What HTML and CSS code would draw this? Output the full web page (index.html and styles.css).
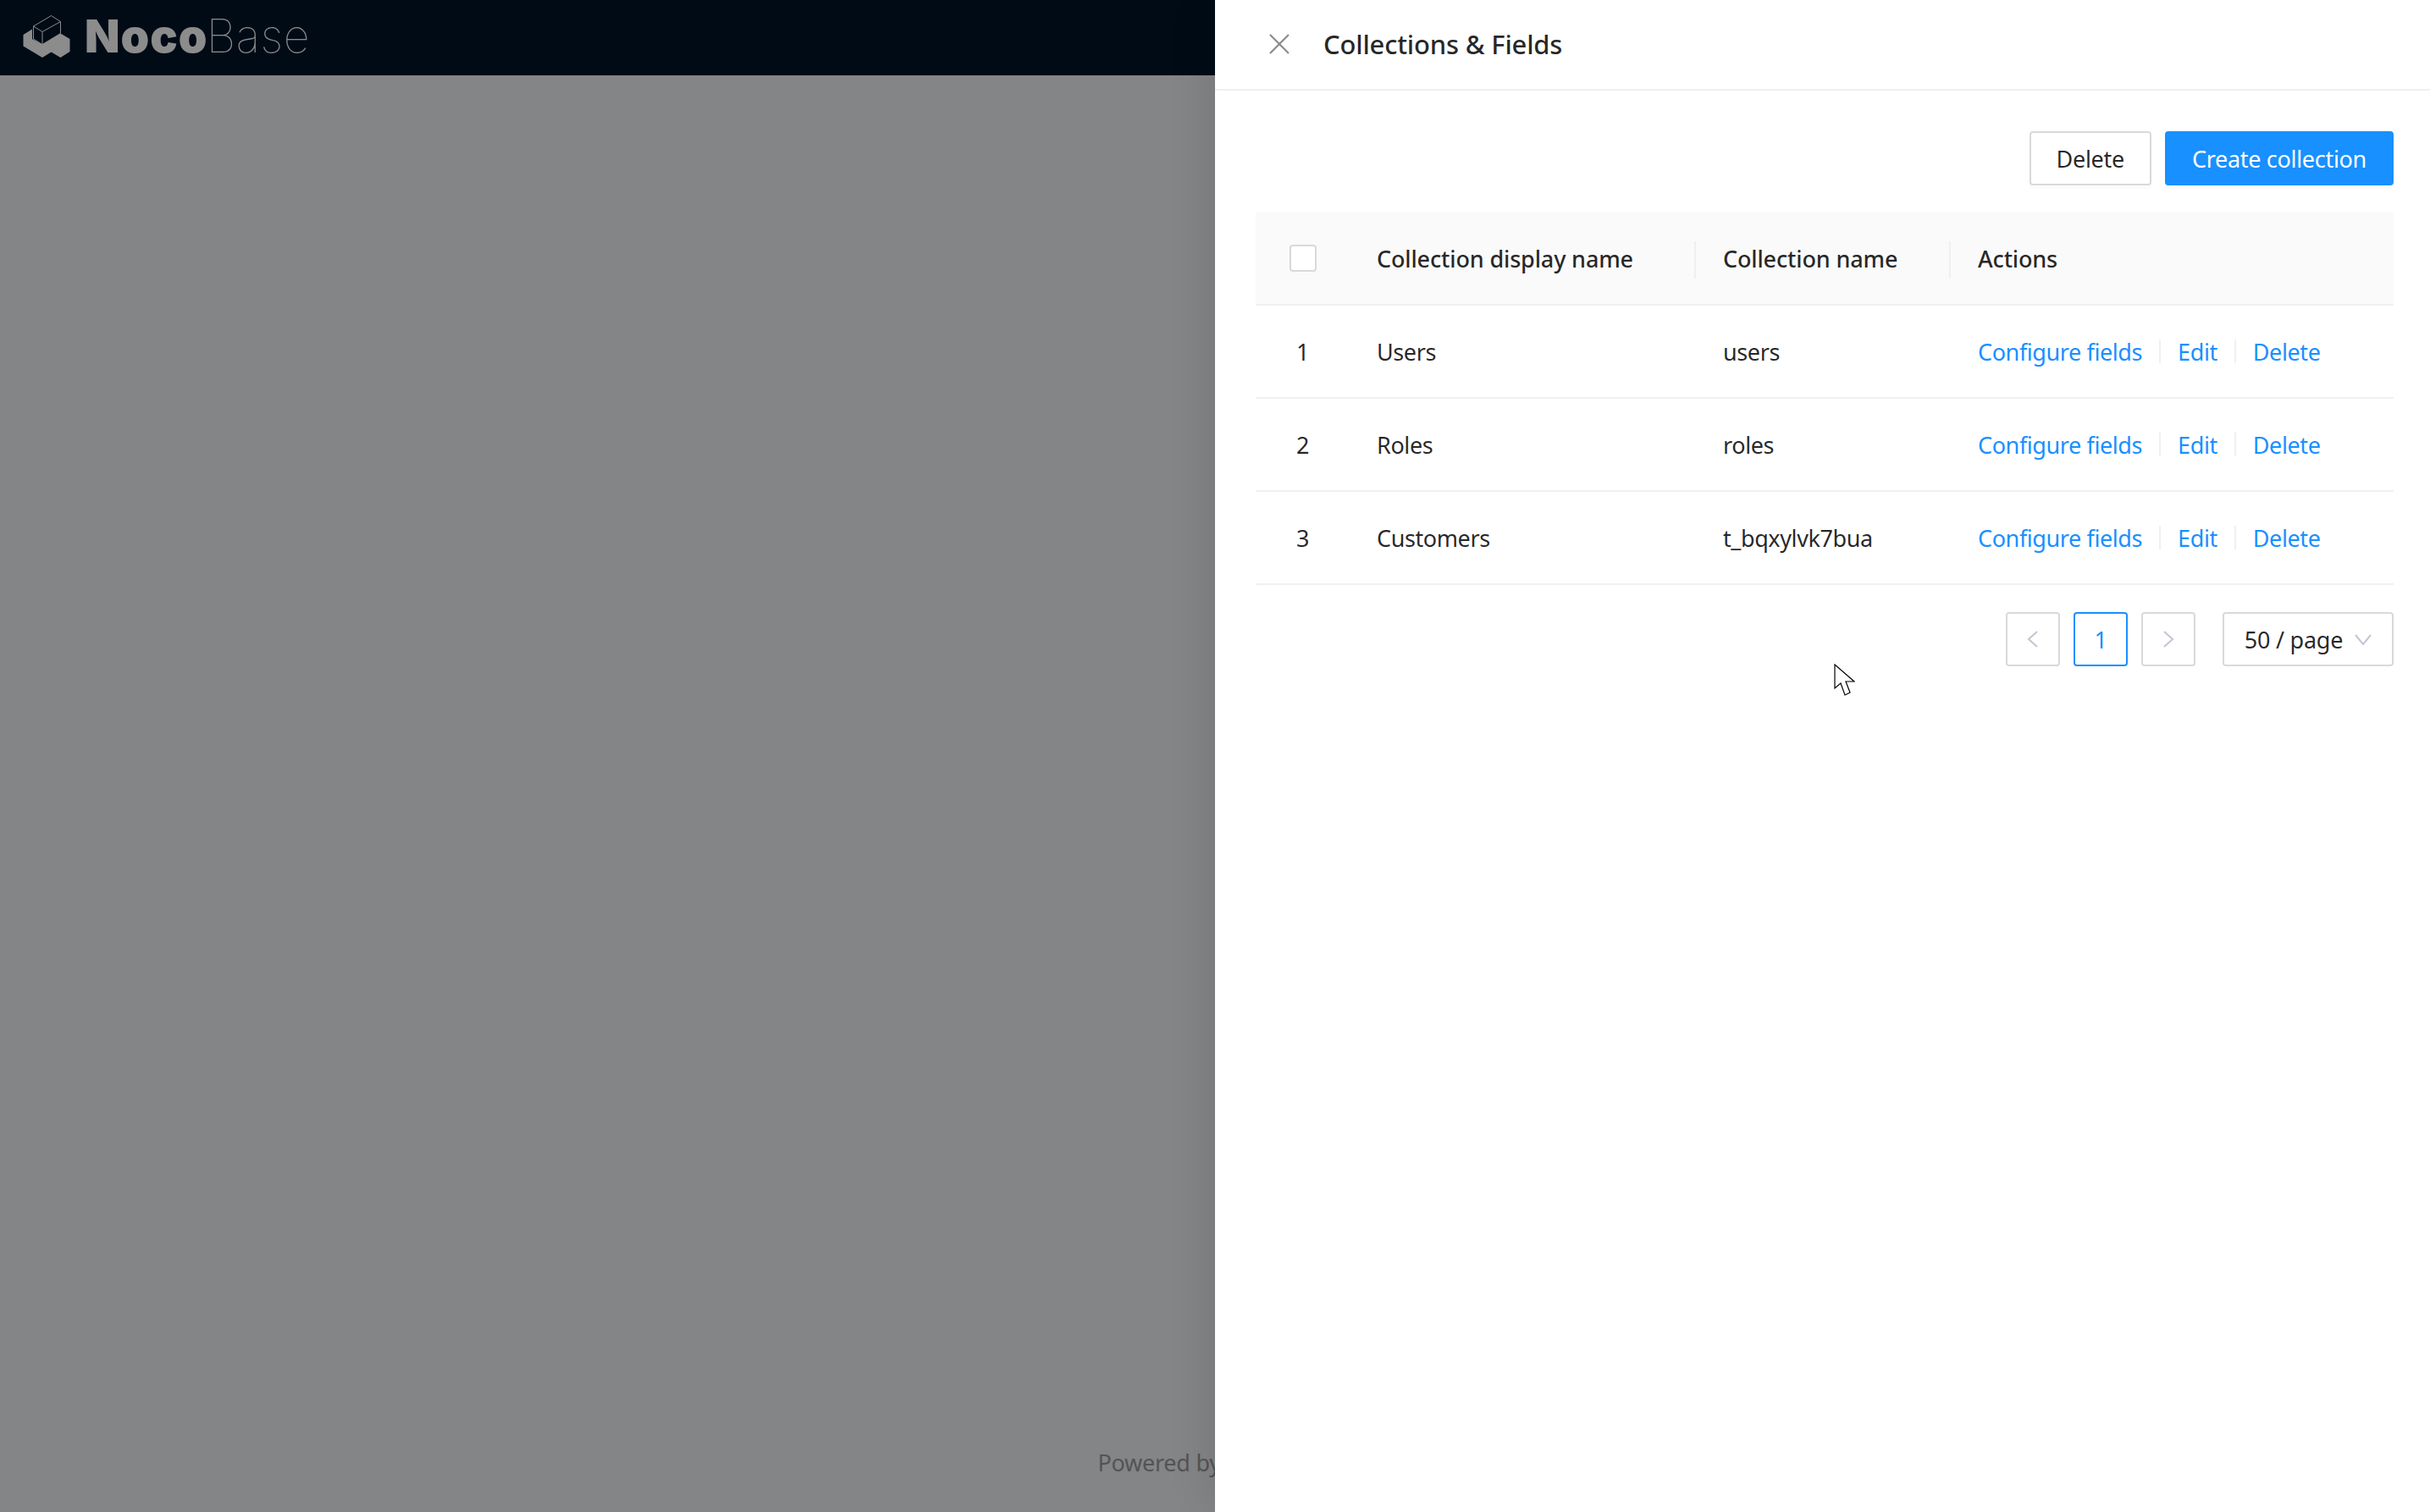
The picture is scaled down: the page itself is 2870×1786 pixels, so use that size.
FILE: index.html
```html
<!DOCTYPE html>
<html lang="en">
<head>
    <meta charset="UTF-8">
    <title>NocoBase</title>
    <link rel="stylesheet" href="styles.css">
</head>
<body>
    <div class="layout">
        <header class="topbar">
            <svg class="logo-mark" viewBox="0 0 110 70" width="110" height="70">
                <path d="M17.5 36 L28 29.5 L28 41 L40 47.5 L61.5 34.5 L72.5 41 L72.5 56 L61.5 63 L50.500 56.500 L40 63 L17.500 49.500 Z" fill="#fff"/>
                <path d="M29.500 26 L50.500 13.500 L61.500 20.500 L61.500 34.500 L40 47.500 L29.500 41 Z M29.500 26 L40 32.500 L61.500 20.500 M40 32.500 L40 47.500" fill="none" stroke="#fff" stroke-width="1"/>
            </svg>
            <div class="logo-text"><span class="logo-bold">Noco</span><span class="logo-thin">Base</span></div>
        </header>
        <main class="content"></main>
        <footer class="footer">Powered by NocoBase</footer>
    </div>

    <div class="mask"></div>

    <aside class="drawer">
        <div class="drawer-header">
            <svg class="close-icon" viewBox="0 0 24 24" width="24" height="24">
                <path d="M1 1 L23 23 M23 1 L1 23" fill="none" stroke="#8c8c8c" stroke-width="2.200"/>
            </svg>
            <h1 class="drawer-title">Collections &amp; Fields</h1>
        </div>
        <div class="drawer-body">
            <div class="toolbar">
                <button class="btn">Delete</button>
                <button class="btn btn-primary">Create collection</button>
            </div>
            <table class="data-table">
                <thead>
                    <tr>
                        <th class="col-index"><span class="checkbox"></span></th>
                        <th class="col-display">Collection display name</th>
                        <th class="col-name">Collection name</th>
                        <th>Actions</th>
                    </tr>
                </thead>
                <tbody>
                    <tr>
                        <td class="col-index">1</td>
                        <td>Users</td>
                        <td>users</td>
                        <td>
                            <div class="actions">
                                <a href="#">Configure fields</a><i></i><a href="#">Edit</a><i></i><a href="#">Delete</a>
                            </div>
                        </td>
                    </tr>
                    <tr>
                        <td class="col-index">2</td>
                        <td>Roles</td>
                        <td>roles</td>
                        <td>
                            <div class="actions">
                                <a href="#">Configure fields</a><i></i><a href="#">Edit</a><i></i><a href="#">Delete</a>
                            </div>
                        </td>
                    </tr>
                    <tr>
                        <td class="col-index">3</td>
                        <td>Customers</td>
                        <td>t_bqxylvk7bua</td>
                        <td>
                            <div class="actions">
                                <a href="#">Configure fields</a><i></i><a href="#">Edit</a><i></i><a href="#">Delete</a>
                            </div>
                        </td>
                    </tr>
                </tbody>
            </table>
            <div class="pagination">
                <span class="page-item">
                    <svg viewBox="0 0 14 20" width="14" height="20"><path d="M12 1 L2 10 L12 19" fill="none" stroke="#c4c4d4" stroke-width="2"/></svg>
                </span>
                <span class="page-item page-active">1</span>
                <span class="page-item">
                    <svg viewBox="0 0 14 20" width="14" height="20"><path d="M2 1 L12 10 L2 19" fill="none" stroke="#c4c4d4" stroke-width="2"/></svg>
                </span>
                <span class="page-size">
                    50 / page
                    <svg viewBox="0 0 20 13" width="20" height="13"><path d="M1 1 L10 12 L19 1" fill="none" stroke="#c4c4d4" stroke-width="2"/></svg>
                </span>
            </div>
        </div>
    </aside>

    <svg class="cursor" viewBox="0 0 25 38" width="25" height="38">
        <path d="M1 1 L1 29 L8 23 L13 37 L19 34 L14 21 L24 21 Z" fill="#fff" stroke="#000" stroke-width="1.200"/>
    </svg>
</body>
</html>
```

FILE: styles.css
```css
* {
    box-sizing: border-box;
}
body {
    margin: 0;
    width: 2870px;
    height: 1786px;
    overflow: hidden;
    position: relative;
    font-family: 'Noto Sans', sans-serif;
    font-size: 27px;
    letter-spacing: -0.25px;
    color: rgba(0, 0, 0, 0.85);
}

/* page behind the drawer */
.layout {
    height: 100%;
    display: flex;
    flex-direction: column;
    background-color: #f0f2f5;
}
.topbar {
    height: 89px;
    flex: none;
    display: flex;
    background-color: #001529;
    padding: 8px 0 0 10px;
}
.logo-mark {
    flex: none;
    margin-top: -3px;
}
.logo-text {
    font-family: Inter, sans-serif;
    font-size: 54px;
    line-height: 70px;
    letter-spacing: 0;
    color: #fff;
    margin-left: -20px;
}
.logo-bold {
    font-weight: 900;
    letter-spacing: 1px;
}
.logo-thin {
    font-weight: 100;
    margin-left: -2px;
    letter-spacing: 0.5px;
}
.content {
    flex: 1;
}
.footer {
    text-align: center;
    color: #9a9a9a;
    height: 98px;
    padding-top: 20px;
    line-height: 40px;
}
.mask {
    position: absolute;
    inset: 0;
    background-color: rgba(0, 0, 0, 0.45);
}

/* drawer */
.drawer {
    position: absolute;
    top: 0;
    right: 0;
    bottom: 0;
    width: 1435px;
    background-color: #fff;
    box-shadow: -12px 0 48px -8px rgba(0, 0, 0, 0.12);
}
.drawer-header {
    height: 107px;
    display: flex;
    align-items: center;
    padding: 0 0 2px 64px;
    border-bottom: 2px solid #f0f0f0;
}
.close-icon {
    flex: none;
}
.drawer-title {
    margin: 0 0 0 40px;
    font-size: 31px;
    font-weight: 500;
    line-height: 44px;
    letter-spacing: -0.2px;
}
.drawer-body {
    padding: 48px 43px 0 48px;
}
.toolbar {
    display: flex;
    justify-content: flex-end;
    gap: 16px;
}
.btn {
    height: 64px;
    padding: 0 30px;
    font-family: inherit;
    font-size: 27px;
    letter-spacing: -0.3px;
    color: rgba(0, 0, 0, 0.85);
    background-color: #fff;
    border: 2px solid #d9d9d9;
    border-radius: 4px;
    box-shadow: 0 4px 0 rgba(0, 0, 0, 0.015);
}
.btn-primary {
    color: #fff;
    background-color: #1890ff;
    border-color: #1890ff;
}

/* table */
.data-table {
    width: 100%;
    margin-top: 32px;
    border-collapse: separate;
    border-spacing: 0;
    table-layout: fixed;
}
.data-table th,
.data-table td {
    height: 110px;
    padding: 0 32px;
    text-align: left;
    border-bottom: 2px solid #f0f0f0;
}
.data-table td {
    letter-spacing: -0.4px;
}
.data-table th {
    position: relative;
    font-weight: 500;
    letter-spacing: -0.15px;
    background-color: #fafafa;
}
.col-index {
    width: 111px;
}
.col-display {
    width: 409px;
}
.col-name {
    width: 301px;
}
.data-table .col-index {
    padding: 0;
    text-align: center;
}
.col-display::after,
.col-name::after {
    content: "";
    position: absolute;
    right: 0;
    top: 34px;
    width: 2px;
    height: 44px;
    background-color: #f0f0f0;
}
.checkbox {
    display: block;
    width: 32px;
    height: 32px;
    margin: 0 auto;
    background-color: #fff;
    border: 2px solid #d9d9d9;
    border-radius: 4px;
}
.actions {
    display: flex;
    align-items: center;
}
.actions a {
    color: #1890ff;
    text-decoration: none;
}
.actions i {
    width: 2px;
    height: 28px;
    margin: 0 20px;
    background-color: #f0f0f0;
}

/* pagination */
.pagination {
    display: flex;
    justify-content: flex-end;
    margin-top: 32px;
    gap: 16px;
}
.page-item,
.page-size {
    height: 64px;
    display: flex;
    align-items: center;
    justify-content: center;
    border: 2px solid #d9d9d9;
    border-radius: 4px;
}
.page-item {
    width: 64px;
}
.page-active {
    color: #1890ff;
    border-color: #1890ff;
}
.page-size {
    width: 202px;
    margin-left: 16px;
    gap: 14px;
}

.cursor {
    position: absolute;
    left: 2166px;
    top: 784px;
}
```
